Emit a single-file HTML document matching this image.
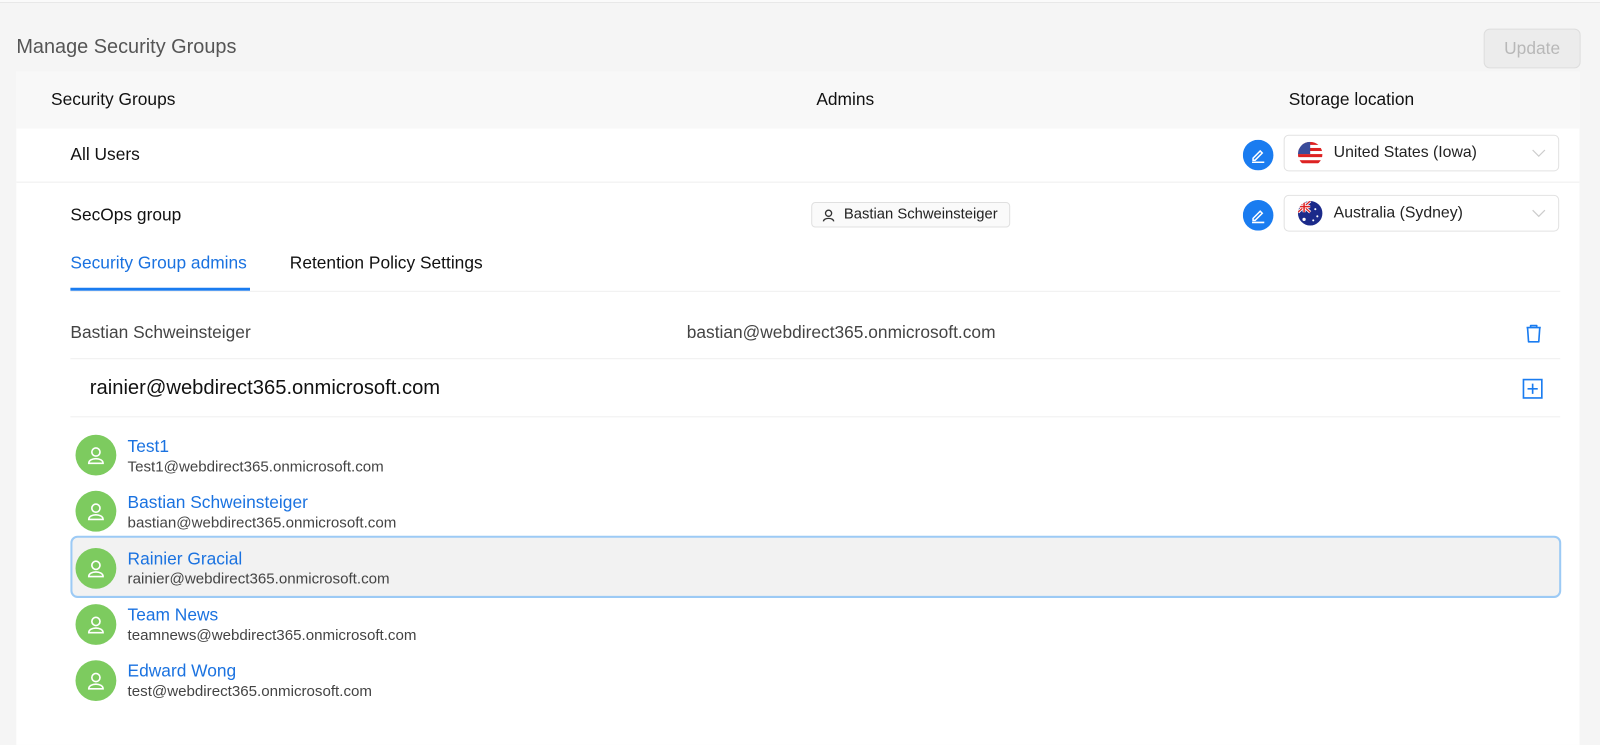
<!DOCTYPE html>
<html><head><style>
*{box-sizing:border-box;margin:0;padding:0}
body{width:1600px;height:723px;background:#f5f5f5;font-family:"Liberation Sans",Arial,sans-serif;position:relative;overflow:hidden;color:#222}
#w{position:absolute;left:0;top:0;width:1568px;height:709px;transform:scale(1.0204);transform-origin:0 0}
.a{position:absolute}
.top{left:0;top:0;width:1568px;height:3px;border-bottom:1px solid #e8e8e8;background:#fafafa}
h1{position:absolute;left:16px;top:35px;font-size:19.5px;font-weight:normal;color:#555}
.upd{left:1454px;top:28px;width:95px;height:39px;border:1px solid #ddd;border-radius:6px;background:#ececec;color:#b8b8b8;font-size:17px;text-align:center;line-height:37px}
.card{left:16px;top:70px;width:1532px;height:660px;background:#fff}
.hdr{left:16px;top:70px;width:1532px;height:56px;background:#f8f8f8}
.t{font-size:17px;color:#111;white-space:nowrap}
.line{height:1px;background:#efefef}
.sel{width:270px;height:36px;border:1px solid #e2e2e2;border-radius:5px;background:#fff}
.chip{left:795px;top:198px;width:195px;height:25px;border:1px solid #e0e0e0;border-radius:4px;background:#fafafa;font-size:14.5px}
.av{width:40px;height:40px;border-radius:50%;background:#7dcb5f}
.nm{font-size:17px;color:#1a72e0;white-space:nowrap}
.em{font-size:14.8px;color:#444;white-space:nowrap}
</style></head><body><div id="w">
<div class="a top"></div>
<h1>Manage Security Groups</h1>
<div class="a upd">Update</div>
<div class="a card"></div>
<div class="a hdr"></div>
<div class="a t" style="left:50px;top:88px">Security Groups</div>
<div class="a t" style="left:800px;top:88px">Admins</div>
<div class="a t" style="left:1263px;top:88px">Storage location</div>

<div class="a t" style="left:69px;top:142px">All Users</div>
<div class="a line" style="left:16px;top:178px;width:1532px"></div>
<div class="a t" style="left:69px;top:201px">SecOps group</div>

<svg class="a" style="left:1218px;top:137px" width="30" height="30"><circle cx="15" cy="15" r="15" fill="#1a7cf0"/><path d="M10 18l7-7 2 2-7 7h-2z" fill="none" stroke="#fff" stroke-width="1.5"/><path d="M9 22h12" stroke="#fff" stroke-width="1.5"/></svg>
<svg class="a" style="left:1218px;top:196px" width="30" height="30"><circle cx="15" cy="15" r="15" fill="#1a7cf0"/><path d="M10 18l7-7 2 2-7 7h-2z" fill="none" stroke="#fff" stroke-width="1.5"/><path d="M9 22h12" stroke="#fff" stroke-width="1.5"/></svg>

<div class="a sel" style="left:1258px;top:132px"></div>
<svg class="a" style="left:1272px;top:139px" width="24" height="24"><defs><clipPath id="c1"><circle cx="12" cy="12" r="12"/></clipPath></defs><g clip-path="url(#c1)"><rect width="24" height="24" fill="#fff"/><rect y="0" width="24" height="3" fill="#d22"/><rect y="6" width="24" height="3" fill="#d22"/><rect y="12" width="24" height="3" fill="#d22"/><rect y="18" width="24" height="3" fill="#d22"/><rect width="12" height="12" fill="#3a4c9a"/></g></svg>
<div class="a" style="left:1307px;top:141px;font-size:15.5px;white-space:nowrap">United States (Iowa)</div>
<svg class="a" style="left:1501px;top:146px" width="14" height="8"><path d="M1 1l6 6 6-6" fill="none" stroke="#ccc" stroke-width="1.2"/></svg>

<div class="a sel" style="left:1258px;top:191px"></div>
<svg class="a" style="left:1272px;top:197px" width="24" height="24"><defs><clipPath id="c2"><circle cx="12" cy="12" r="12"/></clipPath></defs><g clip-path="url(#c2)"><rect width="24" height="24" fill="#1b2a8a"/><path d="M0 0l12 11M12 0L0 11" stroke="#fff" stroke-width="3"/><path d="M0 0l12 11M12 0L0 11" stroke="#d22" stroke-width="1.2"/><path d="M6 0v11M0 5.5h12" stroke="#fff" stroke-width="3"/><path d="M6 0v11M0 5.5h12" stroke="#d22" stroke-width="1.5"/><circle cx="6" cy="18" r="1.6" fill="#fff"/><circle cx="17" cy="8" r="1" fill="#fff"/><circle cx="19" cy="15" r="1" fill="#fff"/><circle cx="15" cy="19" r="1" fill="#fff"/></g></svg>
<div class="a" style="left:1307px;top:200px;font-size:15.5px;white-space:nowrap">Australia (Sydney)</div>
<svg class="a" style="left:1501px;top:205px" width="14" height="8"><path d="M1 1l6 6 6-6" fill="none" stroke="#ccc" stroke-width="1.2"/></svg>

<div class="a chip"><svg class="a" style="left:9px;top:5px" width="14" height="14"><circle cx="7" cy="5" r="3" fill="none" stroke="#333" stroke-width="1.3"/><path d="M2 13c0-4 10-4 10 0" fill="none" stroke="#333" stroke-width="1.3"/></svg><span class="a" style="left:31px;top:3px;white-space:nowrap">Bastian Schweinsteiger</span></div>

<div class="a t" style="left:69px;top:248px;color:#1a72e0">Security Group admins</div>
<div class="a" style="left:69px;top:282px;width:176px;height:3px;background:#1a7cf0"></div>
<div class="a t" style="left:284px;top:248px">Retention Policy Settings</div>
<div class="a line" style="left:69px;top:285px;width:1460px"></div>

<div class="a t" style="left:69px;top:316px;color:#444">Bastian Schweinsteiger</div>
<div class="a t" style="left:673px;top:316px;color:#444">bastian@webdirect365.onmicrosoft.com</div>
<svg class="a" style="left:1492px;top:316px" width="22" height="22"><path d="M4 5h14M8 5V3h6v2M5 5l1 14h10l1-14" fill="none" stroke="#1a7cf0" stroke-width="1.6" stroke-linejoin="round"/></svg>
<div class="a line" style="left:69px;top:351px;width:1460px"></div>

<div class="a" style="left:88px;top:369px;font-size:19.8px;color:#111;white-space:nowrap">rainier@webdirect365.onmicrosoft.com</div>
<svg class="a" style="left:1491px;top:370px" width="22" height="22"><rect x="2" y="2" width="18" height="18" fill="none" stroke="#1a7cf0" stroke-width="1.6"/><path d="M11 6v10M6 11h10" stroke="#1a7cf0" stroke-width="1.6"/></svg>
<div class="a line" style="left:69px;top:408px;width:1460px"></div>

<div class="a" style="left:69px;top:525px;width:1461px;height:61px;background:#f2f2f2;border:2px solid #9ccaf5;border-radius:7px"></div>

<div class="a av" style="left:74px;top:426px"></div><svg class="a" style="left:84px;top:436px" width="20" height="20"><circle cx="10" cy="7" r="4" fill="none" stroke="#fff" stroke-width="1.6"/><path d="M3 18c0-6 14-6 14 0z" fill="none" stroke="#fff" stroke-width="1.6"/></svg>
<div class="a nm" style="left:125px;top:428px">Test1</div><div class="a em" style="left:125px;top:450px">Test1@webdirect365.onmicrosoft.com</div>

<div class="a av" style="left:74px;top:481px"></div><svg class="a" style="left:84px;top:491px" width="20" height="20"><circle cx="10" cy="7" r="4" fill="none" stroke="#fff" stroke-width="1.6"/><path d="M3 18c0-6 14-6 14 0z" fill="none" stroke="#fff" stroke-width="1.6"/></svg>
<div class="a nm" style="left:125px;top:483px">Bastian Schweinsteiger</div><div class="a em" style="left:125px;top:505px">bastian@webdirect365.onmicrosoft.com</div>

<div class="a av" style="left:74px;top:537px"></div><svg class="a" style="left:84px;top:547px" width="20" height="20"><circle cx="10" cy="7" r="4" fill="none" stroke="#fff" stroke-width="1.6"/><path d="M3 18c0-6 14-6 14 0z" fill="none" stroke="#fff" stroke-width="1.6"/></svg>
<div class="a nm" style="left:125px;top:538px">Rainier Gracial</div><div class="a em" style="left:125px;top:560px">rainier@webdirect365.onmicrosoft.com</div>

<div class="a av" style="left:74px;top:592px"></div><svg class="a" style="left:84px;top:602px" width="20" height="20"><circle cx="10" cy="7" r="4" fill="none" stroke="#fff" stroke-width="1.6"/><path d="M3 18c0-6 14-6 14 0z" fill="none" stroke="#fff" stroke-width="1.6"/></svg>
<div class="a nm" style="left:125px;top:593px">Team News</div><div class="a em" style="left:125px;top:615px">teamnews@webdirect365.onmicrosoft.com</div>

<div class="a av" style="left:74px;top:647px"></div><svg class="a" style="left:84px;top:657px" width="20" height="20"><circle cx="10" cy="7" r="4" fill="none" stroke="#fff" stroke-width="1.6"/><path d="M3 18c0-6 14-6 14 0z" fill="none" stroke="#fff" stroke-width="1.6"/></svg>
<div class="a nm" style="left:125px;top:648px">Edward Wong</div><div class="a em" style="left:125px;top:670px">test@webdirect365.onmicrosoft.com</div>
</div></body></html>
